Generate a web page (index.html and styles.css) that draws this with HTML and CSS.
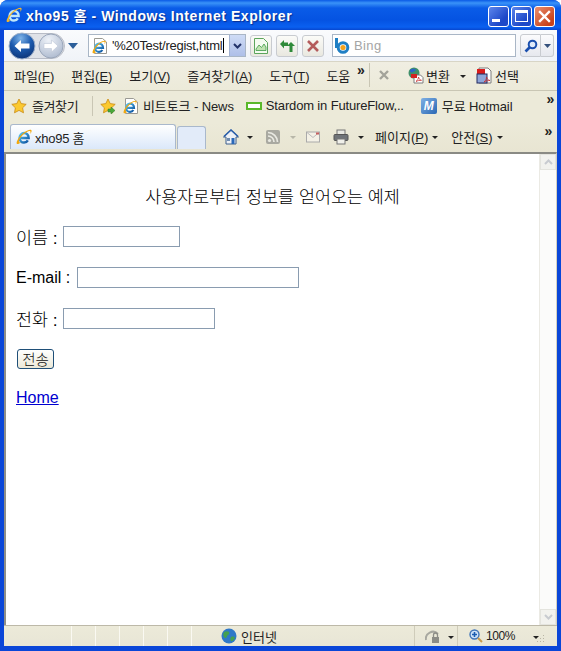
FILE: index.html
```html
<!DOCTYPE html>
<html lang="ko">
<head>
<meta charset="utf-8">
<title>xho95 홈 - Windows Internet Explorer</title>
<link rel="stylesheet" href="styles.css">
</head>
<body>
<svg class="defs" aria-hidden="true">
  <defs>
    <linearGradient id="ieblue" x1="0" y1="0" x2="1" y2="1"><stop offset="0" stop-color="#58c4f0"/><stop offset="1" stop-color="#0a4f9e"/></linearGradient>
    <radialGradient id="orbblue" cx=".45" cy=".2" r=".9"><stop offset="0" stop-color="#7fb4e8"/><stop offset=".45" stop-color="#1d5cb0"/><stop offset="1" stop-color="#0a2c6c"/></radialGradient>
    <radialGradient id="orbgrey" cx=".4" cy=".25" r=".85"><stop offset="0" stop-color="#eef2f8"/><stop offset="1" stop-color="#a9b6cc"/></radialGradient>
    <symbol id="ie" viewBox="0 0 16 16">
      <path d="M3.800 9h8.800c0-2.900-2-4.900-4.500-4.900-2.600 0-4.500 2.200-4.500 4.900s1.900 4.600 4.400 4.600c1.700 0 3-.8 3.800-2.200" fill="none" stroke="url(#ieblue)" stroke-width="2.500"/>
      <path d="M.8 14.800C-.1 13 3 7.500 7 4.300 10.300 1.700 14.300.1 15.300 1.100c.7.800 0 2.400-1.100 3.800.4-1.500.4-2.400-.1-2.800-1-.8-3.800.9-6.300 3C4.600 7.700 2.500 11.400 3 13c.3.500 1 .6 2 .3-1.600 1.400-3.500 2.300-4.200 1.500z" fill="#f2a80c"/>
    </symbol>
    <symbol id="ielight" viewBox="0 0 16 16">
      <path d="M3.800 9h8.800c0-2.900-2-4.900-4.500-4.900-2.600 0-4.500 2.200-4.500 4.900s1.900 4.600 4.400 4.600c1.700 0 3-.8 3.800-2.200" fill="none" stroke="#bfe6fb" stroke-width="2.500"/>
      <path d="M.8 14.800C-.1 13 3 7.500 7 4.300 10.300 1.700 14.300.1 15.300 1.100c.7.800 0 2.400-1.100 3.800.4-1.500.4-2.400-.1-2.800-1-.8-3.800.9-6.300 3C4.600 7.700 2.500 11.400 3 13c.3.500 1 .6 2 .3-1.600 1.400-3.500 2.300-4.200 1.500z" fill="#f2b62c"/>
    </symbol>
    <symbol id="star" viewBox="0 0 16 16">
      <path d="M8 1l2.200 4.600 5 .7-3.600 3.500.9 5L8 12.400l-4.500 2.400.9-5L.8 6.300l5-.7z" fill="#fbc92f" stroke="#c98a16" stroke-width=".8"/>
    </symbol>
    <symbol id="pagee" viewBox="0 0 16 16">
      <path d="M2.500.5h8L14.500 4v11.500h-12z" fill="#fff" stroke="#9a9a94"/>
      <use href="#ie" x="0" y="2" width="14" height="14"/>
    </symbol>
    <symbol id="pdfglobe" viewBox="0 0 17 17">
      <circle cx="7" cy="6" r="5.500" fill="#3f8f6a"/>
      <path d="M3 3c2-2 5-1.500 6 0-1 1.500-2 1-3 2S3 6 3 3z" fill="#2b64c8"/>
      <path d="M7 8h6.500l2.500 2.500V16H7z" fill="#fff" stroke="#7d7d7d"/>
      <rect x="4" y="7" width="6" height="4" fill="#d22222"/>
      <path d="M9 14.500c1.500-1 2.500-3 2.500-4.500.5 2 1.500 3 3 3.300-1.800 0-4 .3-5.500 1.200z" fill="none" stroke="#c83030" stroke-width=".8"/>
    </symbol>
    <symbol id="pdfsel" viewBox="0 0 17 17">
      <path d="M3 1h9l3 3v12H3z" fill="#fff" stroke="#7d7d7d"/>
      <rect x="1" y="2" width="8" height="5" fill="#d91c1c"/>
      <rect x="1" y="7" width="10" height="9" fill="#8fa6d8" stroke="#222a60"/>
      <path d="M8 15c1.500-1 2.500-3 2.500-5 .5 2 1.500 3 3.500 3.500-2 0-4 .5-6 1.500z" fill="none" stroke="#c83030" stroke-width=".8"/>
    </symbol>
  </defs>
</svg>

<div class="window">
  <header class="titlebar">
    <svg class="i16"><use href="#ielight"/></svg>
    <h1 class="title">xho95 <span class="title-ko">홈</span> - Windows Internet Explorer</h1>
    <div class="caption">
      <span class="capbtn"><i class="cap-min"></i></span>
      <span class="capbtn"><i class="cap-max"></i></span>
      <span class="capbtn capclose">
        <svg width="13" height="13" viewBox="0 0 13 13"><path d="M2 2l9 9M11 2l-9 9" stroke="#fff" stroke-width="2.400" stroke-linecap="square"/></svg>
      </span>
    </div>
  </header>

  <div class="chrome">
    <div class="addressbar">
      <div class="navorbs">
        <svg width="58" height="28" viewBox="0 0 58 28">
          <path d="M14 1.500h30a12.500 12.500 0 0 1 0 25H14a12.500 12.500 0 0 1 0-25z" fill="#dfe2e8" stroke="#b8bcc6"/>
          <circle cx="14" cy="14" r="13" fill="url(#orbblue)" stroke="#9fb0c8"/>
          <path d="M6.500 14l6.500-6v3.500h8.500v5H13V20z" fill="#fff"/>
          <circle cx="43" cy="14" r="12" fill="url(#orbgrey)" stroke="#9aa6ba"/>
          <path d="M50 14l-6.500-6v3.500H36v5h7.500V20z" fill="#fff" stroke="#b4bfd0" stroke-width=".5"/>
        </svg>
        <svg class="navdrop" width="10" height="6" viewBox="0 0 10 6"><path d="M0 0h10L5 6z" fill="#2c5f9a"/></svg>
      </div>
      <div class="urlbox">
        <svg class="i16"><use href="#pagee"/></svg>
        <span class="urltext">'%20Test/regist,html</span><span class="caret"></span>
        <span class="urldrop"><svg width="9" height="6" viewBox="0 0 9 6"><path d="M1 1l3.500 3.500L8 1" fill="none" stroke="#23336a" stroke-width="2"/></svg></span>
      </div>
      <div class="navbtns">
        <span class="toolbtn"><svg width="16" height="18" viewBox="0 0 16 18"><path d="M1.500 1.500h9l4 4v11h-13z" fill="#f4fbf0" stroke="#5ca55c"/><path d="M3 12l3-4 2.500 2.500L11 7l2 3v3.500H3z" fill="#bfe3b0" stroke="#3f9a48" stroke-width=".8"/></svg></span>
        <span class="toolbtn"><svg width="17" height="16" viewBox="0 0 17 16"><path d="M1 6l4-4v2.500h4V8H5v2.500z" fill="#2f8a3a"/><path d="M12 4l4 4h-2.500v6h-3V8H8z" fill="#2f8a3a"/></svg></span>
        <span class="toolbtn"><svg width="14" height="14" viewBox="0 0 14 14"><path d="M2 2l10 10M12 2L2 12" stroke="#b45c5c" stroke-width="2.600"/></svg></span>
      </div>
      <div class="searchbox">
        <svg width="17" height="17" viewBox="0 0 17 17"><path d="M2.500 1v10" stroke="#1f7fc4" stroke-width="3"/><circle cx="9" cy="10.500" r="4.800" fill="none" stroke="#1f7fc4" stroke-width="3"/><circle cx="9" cy="10.500" r="2.600" fill="#f4a21c"/></svg>
        <span class="searchtext">Bing</span>
      </div>
      <div class="searchgo">
        <span class="gobtn"><svg width="14" height="14" viewBox="0 0 14 14"><circle cx="8.500" cy="5.500" r="3.800" fill="#dfeafa" stroke="#1a4fae" stroke-width="2"/><path d="M5.500 8.500L1.500 12.500" stroke="#1a4fae" stroke-width="2.600"/></svg></span>
        <span class="godrop"><svg width="7" height="4" viewBox="0 0 7 4"><path d="M0 0h7L3.500 4z" fill="#34507c"/></svg></span>
      </div>
    </div>

    <nav class="menubar">
      <div class="menus">
        <span class="menu">파일(<u>F</u>)</span>
        <span class="menu">편집(<u>E</u>)</span>
        <span class="menu">보기(<u>V</u>)</span>
        <span class="menu">즐겨찾기(<u>A</u>)</span>
        <span class="menu">도구(<u>T</u>)</span>
        <span class="menu">도움</span>
      </div>
      <span class="chev chev-menu">»</span>
      <span class="menusep"></span>
      <svg class="menux" width="10" height="10" viewBox="0 0 10 10"><path d="M1 1l8 8M9 1L1 9" stroke="#a3a39a" stroke-width="2.400"/></svg>
      <div class="menuplugin">
        <svg class="i17"><use href="#pdfglobe"/></svg><span class="plugtext">변환</span>
        <span class="tri tri-plug"></span>
        <svg class="i17"><use href="#pdfsel"/></svg><span class="plugtext">선택</span>
      </div>
    </nav>

    <div class="favbar">
      <svg class="i16"><use href="#star"/></svg>
      <span class="favlabel">즐겨찾기</span>
      <span class="favsep"></span>
      <svg class="i16" viewBox="0 0 16 16"><use href="#star"/><path d="M8 11h3V9l4 3.500-4 3.500v-2H8z" fill="#4aa83a" stroke="#2f7a24" stroke-width=".5"/></svg>
      <svg class="i16 favpage"><use href="#pagee"/></svg>
      <span class="favlink">비트토크 - News</span>
      <span class="greenrect"></span>
      <span class="favlink favlink-star">Stardom in FutureFlow,..</span>
      <span class="mlogo">M</span>
      <span class="favlink">무료 Hotmail</span>
      <span class="chev chev-fav">»</span>
    </div>

    <div class="tabbar">
      <div class="tab">
        <svg class="i16"><use href="#ie"/></svg>
        <span class="tabtext">xho95 홈</span>
      </div>
      <div class="newtab"></div>
      <div class="cmds">
        <svg class="i16" viewBox="0 0 16 16"><path d="M8 1L.5 8H3v7h10V8h2.500z" fill="#eef1f6" stroke="#3d5f8c"/><path d="M1 7.500L8 1l7 6.500" fill="none" stroke="#2a5eaa" stroke-width="1.600"/><rect x="8.500" y="9" width="3" height="6" fill="#2a68b8"/><rect x="4" y="9" width="3" height="3" fill="#6f8cb0"/></svg>
        <span class="tri tri-home"></span>
        <svg class="i14" viewBox="0 0 14 14"><rect width="14" height="14" rx="2" fill="#a9a9a1"/><circle cx="3.500" cy="10.500" r="1.600" fill="#e9e9e2"/><path d="M2 6a6 6 0 0 1 6 6M2 2.500A9.500 9.500 0 0 1 11.500 12" fill="none" stroke="#e9e9e2" stroke-width="1.700"/></svg>
        <span class="tri tri-rss"></span>
        <svg class="i14 mailicon" viewBox="0 0 14 11"><rect x=".5" y=".5" width="13" height="10" fill="#f4f1e6" stroke="#aaa"/><path d="M1 1l6 5 6-5" fill="none" stroke="#bbb"/><rect x="10" y="1" width="3" height="2" fill="#c86060"/></svg>
        <svg class="i16 printer" viewBox="0 0 16 16"><rect x="4" y="1" width="8" height="5" fill="#e8e8e2" stroke="#777"/><rect x="1" y="5.500" width="14" height="6" rx="1" fill="#6f7378" stroke="#555"/><rect x="4" y="10" width="8" height="5" fill="#f0f0ea" stroke="#777"/></svg>
        <span class="tri tri-print"></span>
        <span class="cmd">페이지(<u>P</u>)</span>
        <span class="tri tri-cmd"></span>
        <span class="cmd cmd-safe">안전(<u>S</u>)</span>
        <span class="tri tri-cmd"></span>
      </div>
      <span class="chev chev-tab">»</span>
    </div>
  </div>

  <div class="viewport">
    <main class="page">
      <p class="heading">사용자로부터 정보를 얻어오는 예제</p>
      <form class="form">
        <div class="row"><label class="ko-label" for="name">이름 :</label><input id="name" class="field field-name" type="text"></div>
        <div class="row row-mail"><label class="en-label" for="mail">E-mail :</label><input id="mail" class="field field-mail" type="text"></div>
        <div class="row"><label class="ko-label" for="tel">전화 :</label><input id="tel" class="field field-tel" type="text"></div>
        <div class="row"><button class="submit" type="button">전송</button></div>
      </form>
      <a class="home" href="#">Home</a>
    </main>
    <aside class="scrollbar">
      <span class="scrollbtn"><svg width="9" height="6" viewBox="0 0 9 6"><path d="M1 5l3.500-3.500L8 5" fill="none" stroke="#c8cbd0" stroke-width="2"/></svg></span>
      <span class="scrollbtn"><svg width="9" height="6" viewBox="0 0 9 6"><path d="M1 1l3.500 3.500L8 1" fill="none" stroke="#c8cbd0" stroke-width="2"/></svg></span>
    </aside>
  </div>

  <footer class="statusbar">
    <div class="panes">
      <span class="pane pane-main"></span>
      <span class="pane"></span><span class="pane"></span><span class="pane"></span><span class="pane"></span><span class="pane"></span>
    </div>
    <div class="zone">
      <svg class="i16" viewBox="0 0 16 16"><circle cx="8" cy="8" r="7.500" fill="#2f78c8"/><path d="M3 4c2-1 4-1 5 0 1 2-1 3-2 4 0 2-2 3-3 1S2 6 3 4zM10 9c2-1 4 0 4 1-1 2-3 4-4 3s-1-3 0-4z" fill="#45a050"/></svg>
      <span class="zonetext">인터넷</span>
    </div>
    <div class="protect">
      <svg class="i16" viewBox="0 0 16 16"><path d="M1 12a7 7 0 0 1 12-6" fill="none" stroke="#a8a8a0" stroke-width="2"/><rect x="7" y="9" width="7" height="6" fill="#8c8c86"/><path d="M8.500 9V7a2 2 0 0 1 4 0v2" fill="none" stroke="#8c8c86" stroke-width="1.300"/></svg>
      <span class="tri tri-protect"></span>
    </div>
    <div class="zoom">
      <svg class="i14" viewBox="0 0 14 14"><circle cx="5.500" cy="5.500" r="4.500" fill="#cfe3f8" stroke="#3f74b8" stroke-width="1.400"/><path d="M3 5.500h5M5.500 3v5" stroke="#1a5cb0" stroke-width="1.600"/><path d="M9 9l4 4" stroke="#c99a4a" stroke-width="2"/></svg>
      <span class="zoomtext">100%</span>
      <span class="tri tri-zoom"></span>
    </div>
    <svg class="grip" width="12" height="12" viewBox="0 0 12 12"><path d="M10 2h1v1h-1zM7 5h1v1H7zM10 5h1v1h-1zM4 8h1v1H4zM7 8h1v1H7zM10 8h1v1h-1z" fill="#b8b5a4"/></svg>
  </footer>
</div>
</body>
</html>
```

FILE: styles.css
```css
* { box-sizing: border-box; }
html, body { margin: 0; padding: 0; background: #fff; }
body { width: 561px; height: 651px; overflow: hidden; font-family: "Liberation Sans", "Noto Sans CJK KR", sans-serif; color: #111; }
.defs { position: absolute; width: 0; height: 0; }
svg { display: block; flex: none; }
.i14 { width: 14px; height: 14px; }
.i16 { width: 16px; height: 16px; }
.i17 { width: 17px; height: 17px; }
u { text-decoration: underline; }

.window { width: 561px; height: 651px; display: flex; flex-direction: column; background: #0a46d8; border-radius: 8px 8px 0 0; overflow: hidden; padding-bottom: 5px; }

/* title bar */
.titlebar { height: 30px; flex: none; display: flex; align-items: center; padding: 0 6px 0 6px; gap: 4px; background: linear-gradient(#0a5ae6 0, #3a93f8 3px, #0a5ce8 8px, #0553e2 20px, #0a60f0 27px, #0747d0 30px); }
.title { margin: 0; flex: 1; font-size: 14px; font-weight: 700; color: #fff; letter-spacing: .55px; white-space: nowrap; text-shadow: 1px 1px 1px #0a2f90; }
.title-ko { font-weight: 700; }
.caption { display: flex; gap: 2px; margin-top: 2px; }
.capbtn { width: 21px; height: 21px; display: flex; align-items: center; justify-content: center; border: 1px solid #fff; border-radius: 3px; background: linear-gradient(135deg, #5d86ec, #1d48c8 70%); }
.capclose { background: linear-gradient(135deg, #ea8f70, #c8421a 80%); }
.cap-min { display: block; width: 8px; height: 3px; background: #fff; margin: 8px 6px 0 0; }
.cap-max { display: block; width: 13px; height: 12px; border: 1px solid #fff; border-top-width: 3px; }

/* chrome */
.chrome { flex: none; margin: 0 4px; display: flex; flex-direction: column; background: #ece9d8; }
.addressbar { height: 32px; display: flex; align-items: center; background: linear-gradient(#fafbfd, #f0f3f8); border-bottom: 1px solid #d8d5c6; padding-left: 4px; }
.navorbs { display: flex; align-items: center; width: 80px; gap: 0; }
.navdrop { margin-top: 1px; margin-left: 2px; }
.urlbox { width: 158px; height: 23px; display: flex; align-items: center; background: #fff; border: 1px solid #a9b6c6; padding-left: 3px; margin-right: 4px; }
.urltext { font-size: 13px; margin-left: 4px; letter-spacing: -.28px; white-space: nowrap; color: #222; flex: none; }
.caret { width: 1px; height: 15px; background: #000; flex: none; margin-left: 1px; }
.urldrop { margin-left: auto; width: 16px; height: 21px; display: flex; align-items: center; justify-content: center; background: linear-gradient(#cfdcf6, #aebfe8); border-left: 1px solid #9fb0d0; }
.navbtns { display: flex; gap: 4px; margin-right: 8px; }
.toolbtn { width: 22px; height: 22px; display: flex; align-items: center; justify-content: center; border: 1px solid #c8cbd0; border-radius: 3px; background: linear-gradient(#fbfbf8, #e9e8e0); }
.searchbox { width: 184px; height: 23px; display: flex; align-items: center; gap: 3px; background: #fff; border: 1px solid #a9b6c6; padding-left: 1px; margin-right: 4px; }
.searchtext { font-size: 13px; color: #a5a5a5; letter-spacing: .4px; }
.searchgo { display: flex; width: 34px; height: 23px; }
.gobtn { width: 21px; display: flex; align-items: center; justify-content: center; border: 1px solid #c8cbd0; border-radius: 3px 0 0 3px; background: linear-gradient(#fbfbfd, #e6e8ee); }
.godrop { width: 13px; display: flex; align-items: center; justify-content: center; border: 1px solid #c8cbd0; border-left: 0; border-radius: 0 3px 3px 0; background: linear-gradient(#fbfbfd, #e6e8ee); }

.menubar { height: 29px; display: flex; align-items: center; padding: 0 0 2px 10px; font-size: 13px; color: #222; background: linear-gradient(#f0eee2, #ecead9); border-bottom: 1px solid #c9c6b4; }
.menus { display: flex; gap: 17px; width: 343px; flex: none; white-space: nowrap; }
.menu { letter-spacing: -.05px; }
.chev { font-size: 14px; line-height: 14px; font-weight: 700; color: #222; }
.chev-menu { margin-top: -10px; width: 12px; }
.menusep { width: 1px; height: 24px; background: #c9c6b4; margin-right: 9px; }
.menux { margin-right: 18px; }
.menuplugin { display: flex; align-items: center; gap: 2px; }
.plugtext { font-size: 13px; }
.tri { display: block; flex: none; width: 0; height: 0; border-left: 3px solid transparent; border-right: 3px solid transparent; border-top: 3px solid #222; }
.tri-plug { margin: 2px 8px 0 8px; }

.favbar { height: 32px; display: flex; align-items: center; padding: 0 0 3px 7px; font-size: 13px; color: #222; background: #ecead9; }
.favlabel { margin-left: 5px; width: 60px; letter-spacing: -.4px; }
.favsep { width: 1px; height: 20px; background: #c9c6b4; margin-right: 7px; }
.favpage { margin-left: 7px; margin-right: 4px; }
.favlink { white-space: nowrap; letter-spacing: -.1px; }
.favlink-star { letter-spacing: -.15px; }
.greenrect { width: 16px; height: 8px; border: 2px solid #5ab82a; background: #fff; margin: 0 4px 0 12px; }
.mlogo { width: 16px; height: 16px; margin: 0 5px 0 17px; border-radius: 2px; background: linear-gradient(135deg, #7fb0e4, #2a68b4); color: #fff; font: italic 700 12px/16px "Liberation Sans", sans-serif; text-align: center; }
.chev-fav { margin: -14px 0 0 34px; }

.tabbar { height: 29px; display: flex; align-items: flex-end; padding: 0 0 3px 6px; background: linear-gradient(#ecead9, #e8e5d2); }
.tab { width: 166px; height: 25px; display: flex; align-items: center; gap: 3px; padding-left: 5px; font-size: 13px; background: linear-gradient(#fff, #dbe8fa); border: 1px solid #a9b8cc; border-bottom: 0; border-radius: 3px 3px 0 0; }
.tabtext { white-space: nowrap; color: #222; letter-spacing: -.25px; }
.newtab { width: 29px; height: 23px; background: #e2ebf9; border: 1px solid #a9b8cc; border-bottom: 0; border-radius: 3px 3px 0 0; margin-left: 1px; }
.cmds { display: flex; align-items: center; height: 25px; padding-left: 17px; font-size: 13px; color: #222; white-space: nowrap; }
.tri-home { margin: 1px 13px 0 8px; }
.tri-rss { margin: 1px 10px 0 10px; opacity: .25; }
.mailicon { margin-right: 13px; }
.tri-print { margin: 1px 11px 0 9px; }
.tri-cmd { margin: 2px 0 0 4px; }
.cmd-safe { margin-left: 13px; }
.chev-tab { margin: 0 0 11px 42px; }

/* page */
.viewport { flex: 1; min-height: 0; margin: 0 4px; display: flex; background: #fff; border-top: 2px solid #8a8a84; border-left: 2px solid #8e8e88; border-right: 1px solid #d4d0c0; }
.page { flex: 1; padding: 33px 0 0 10px; font-size: 16px; color: #000; }
.heading { margin: 0 0 19px -10px; text-align: center; font-size: 17.400px; line-height: 20px; white-space: nowrap; font-weight: 300; color: #000; }
.form { display: flex; flex-direction: column; gap: 20px; }
.row { height: 21px; display: flex; align-items: center; gap: 6px; margin-left: 0; }
.ko-label { font-size: 17.400px; width: 41px; white-space: nowrap; font-weight: 300; color: #000; }
.en-label { font-size: 16px; width: 55px; white-space: nowrap; }
.field { height: 21px; padding: 0; border: 1px solid #8a9cb0; background: #fff; }
.field-name { width: 117px; }
.field-mail { width: 222px; }
.field-tel { width: 152px; }
.submit { width: 37px; height: 20px; margin-left: 1px; padding: 0; align-self: flex-start; border: 1px solid #1f4f78; border-radius: 3px; background: linear-gradient(#fff, #ece9d8); font: 300 14.500px/1 "Noto Sans CJK KR", sans-serif; color: #111; }
.home { display: inline-block; margin-top: 19px; font-size: 16px; line-height: 18px; color: #0000d0; }
.scrollbar { width: 17px; flex: none; display: flex; flex-direction: column; justify-content: space-between; background: #fbfbfa; border-left: 1px solid #ebeae4; }
.scrollbtn { height: 16px; display: flex; align-items: center; justify-content: center; background: #f2f2ee; border: 1px solid #e4e4de; }

/* status bar */
.statusbar { height: 21px; flex: none; margin: 0 4px; display: flex; align-items: center; font-size: 13px; color: #222; background: linear-gradient(#ecead9, #e8e6d6); border-top: 1px solid #bdb9a8; }
.panes { display: flex; height: 100%; width: 188px; flex: none; }
.pane { width: 24px; border-right: 1px solid #faf9f2; }
.pane-main { width: 68px; }
.zone { display: flex; align-items: center; gap: 4px; width: 223px; flex: none; padding-left: 29px; border-right: 1px solid #cfccba; height: 100%; }
.protect { display: flex; align-items: center; width: 43px; flex: none; height: 100%; padding-left: 10px; border-right: 1px solid #cfccba; }
.tri-protect { margin: 2px 0 0 7px; }
.zoom { display: flex; align-items: center; padding-left: 11px; gap: 3px; width: 84px; flex: none; }
.zoomtext { font-size: 12px; letter-spacing: -.4px; }
.tri-zoom { margin: 2px 0 0 15px; }
.grip { margin-left: -9px; margin-top: 6px; }
```
